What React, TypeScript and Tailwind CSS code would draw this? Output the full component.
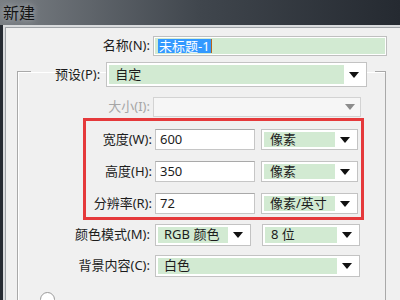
import React from 'react';

const font = 'font-["Noto_Sans","Noto_Sans_CJK_SC",sans-serif]';

function Arrow({ muted }: { muted?: boolean }) {
  return (
    <svg width="10" height="6" viewBox="0 0 10 6" className="block">
      <polygon points="0,0 10,0 5,6" fill={muted ? '#8c8c8c' : '#111'} />
    </svg>
  );
}

function Select({ value, w, h = 22 }: { value: string; w: string; h?: number }) {
  return (
    <div
      className={`flex ${w} shrink-0 border border-[#c3c3c3] bg-white p-[2px]`}
      style={{ height: h }}
    >
      <span className="flex flex-1 items-center bg-[#d2ead2] pl-[6px] text-[13px] text-[#1c1c1c]">{value}</span>
      <span className="flex w-[20px] items-center justify-center">
        <Arrow />
      </span>
    </div>
  );
}

function NumField({ label, value, unit }: { label: string; value: string; unit: string }) {
  return (
    <div className="flex h-[21px] items-center">
      <span className="w-[66px] shrink-0 text-right text-[13px] text-[#1c1c1c]">{label}</span>
      <div className="ml-[3px] flex h-[21px] w-[100px] items-center border border-[#c6c6c6] border-t-[#a9a9a9] bg-white pl-[4px] text-[13px] text-[#1c1c1c]">
        {value}
      </div>
      <div className="ml-[6px]">
        <Select value={unit} w="w-[97px]" h={21} />
      </div>
    </div>
  );
}

export default function App() {
  return (
    <div className={`flex h-[300px] w-[400px] flex-col overflow-hidden bg-[#262b32] ${font}`}>
      {/* title bar */}
      <div className="flex h-[25px] shrink-0 items-center bg-gradient-to-r from-[#7a7f84] via-[#40464d] to-[#252a31] pl-[3px]">
        <span className="text-[16px] leading-none text-[#141414] [text-shadow:0_0_6px_rgba(220,224,228,0.7)]">新建</span>
      </div>

      {/* client frame */}
      <div className="flex flex-1">
        <div className="w-[3px] bg-[#262b32]" />
        <div className="flex-1 border-l-2 border-t-2 border-[#d9dbdd]">
          <div className="h-full border-l border-t border-[#9ea2a6] bg-[#f0f0f0]">
            {/* 名称 */}
            <div className="mt-[8px] flex h-[20px] items-center">
              <span className="w-[144px] text-right text-[13px] text-[#1c1c1c]">名称(N):</span>
              <div className="ml-[3px] flex h-[20px] w-[234px] border border-[#bfbfbf] bg-white p-[1px]">
                <div className="flex flex-1 items-center bg-[#d2ead2] pl-[3px]">
                  <span className="bg-[#3399ff] px-[1px] text-[13px] leading-[14px] text-white">未标题-1</span>
                  <span className="h-[14px] w-[1px] bg-[#b5651d]" />
                </div>
              </div>
            </div>

            {/* group */}
            <fieldset className="ml-[11px] w-[369px] border border-[#a9a9a9] shadow-[inset_1px_1px_0_#fff] pb-[20px]">
              <legend className="ml-[13px] pr-[8px] pl-[24px] pt-[6px]">
                <div className="flex h-[25px] items-center">
                  <span className="text-[13px] text-[#1c1c1c]">预设(P):</span>
                  <div className="ml-[6px]">
                    <Select value="自定" w="w-[261px]" h={25} />
                  </div>
                </div>
              </legend>

              {/* 大小 disabled */}
              <div className="mt-[10px] flex h-[20px] items-center">
                <span className="w-[132px] text-right text-[13px] text-[#a6a6a6]">大小(I):</span>
                <div className="ml-[3px] flex h-[20px] w-[208px] border border-[#d3d3d3] bg-[#f6f6f6]">
                  <span className="flex-1" />
                  <span className="flex w-[20px] items-center justify-center">
                    <Arrow muted />
                  </span>
                </div>
              </div>

              {/* highlighted size block */}
              <div className="ml-[65px] mt-[1px] flex w-[281px] flex-col gap-[11px] border-[3px] border-[#e5393b] pb-[3px] pt-[8px]">
                <NumField label="宽度(W):" value="600" unit="像素" />
                <NumField label="高度(H):" value="350" unit="像素" />
                <NumField label="分辨率(R):" value="72" unit="像素/英寸" />
              </div>

              {/* 颜色模式 */}
              <div className="mt-[4px] flex h-[22px] items-center">
                <span className="w-[132px] text-right text-[13px] text-[#1c1c1c]">颜色模式(M):</span>
                <div className="ml-[5px]">
                  <Select value="RGB 颜色" w="w-[96px]" />
                </div>
                <div className="ml-[11px]">
                  <Select value="8 位" w="w-[98px]" />
                </div>
              </div>

              {/* 背景内容 */}
              <div className="mt-[9px] flex h-[22px] items-center">
                <span className="w-[132px] text-right text-[13px] text-[#1c1c1c]">背景内容(C):</span>
                <div className="ml-[5px]">
                  <Select value="白色" w="w-[205px]" />
                </div>
              </div>

              <div className="ml-[22px] mt-[15px] h-[15px] w-[15px] rounded-full border border-[#9a9a9a] bg-white" />
            </fieldset>
          </div>
        </div>
      </div>
    </div>
  );
}
